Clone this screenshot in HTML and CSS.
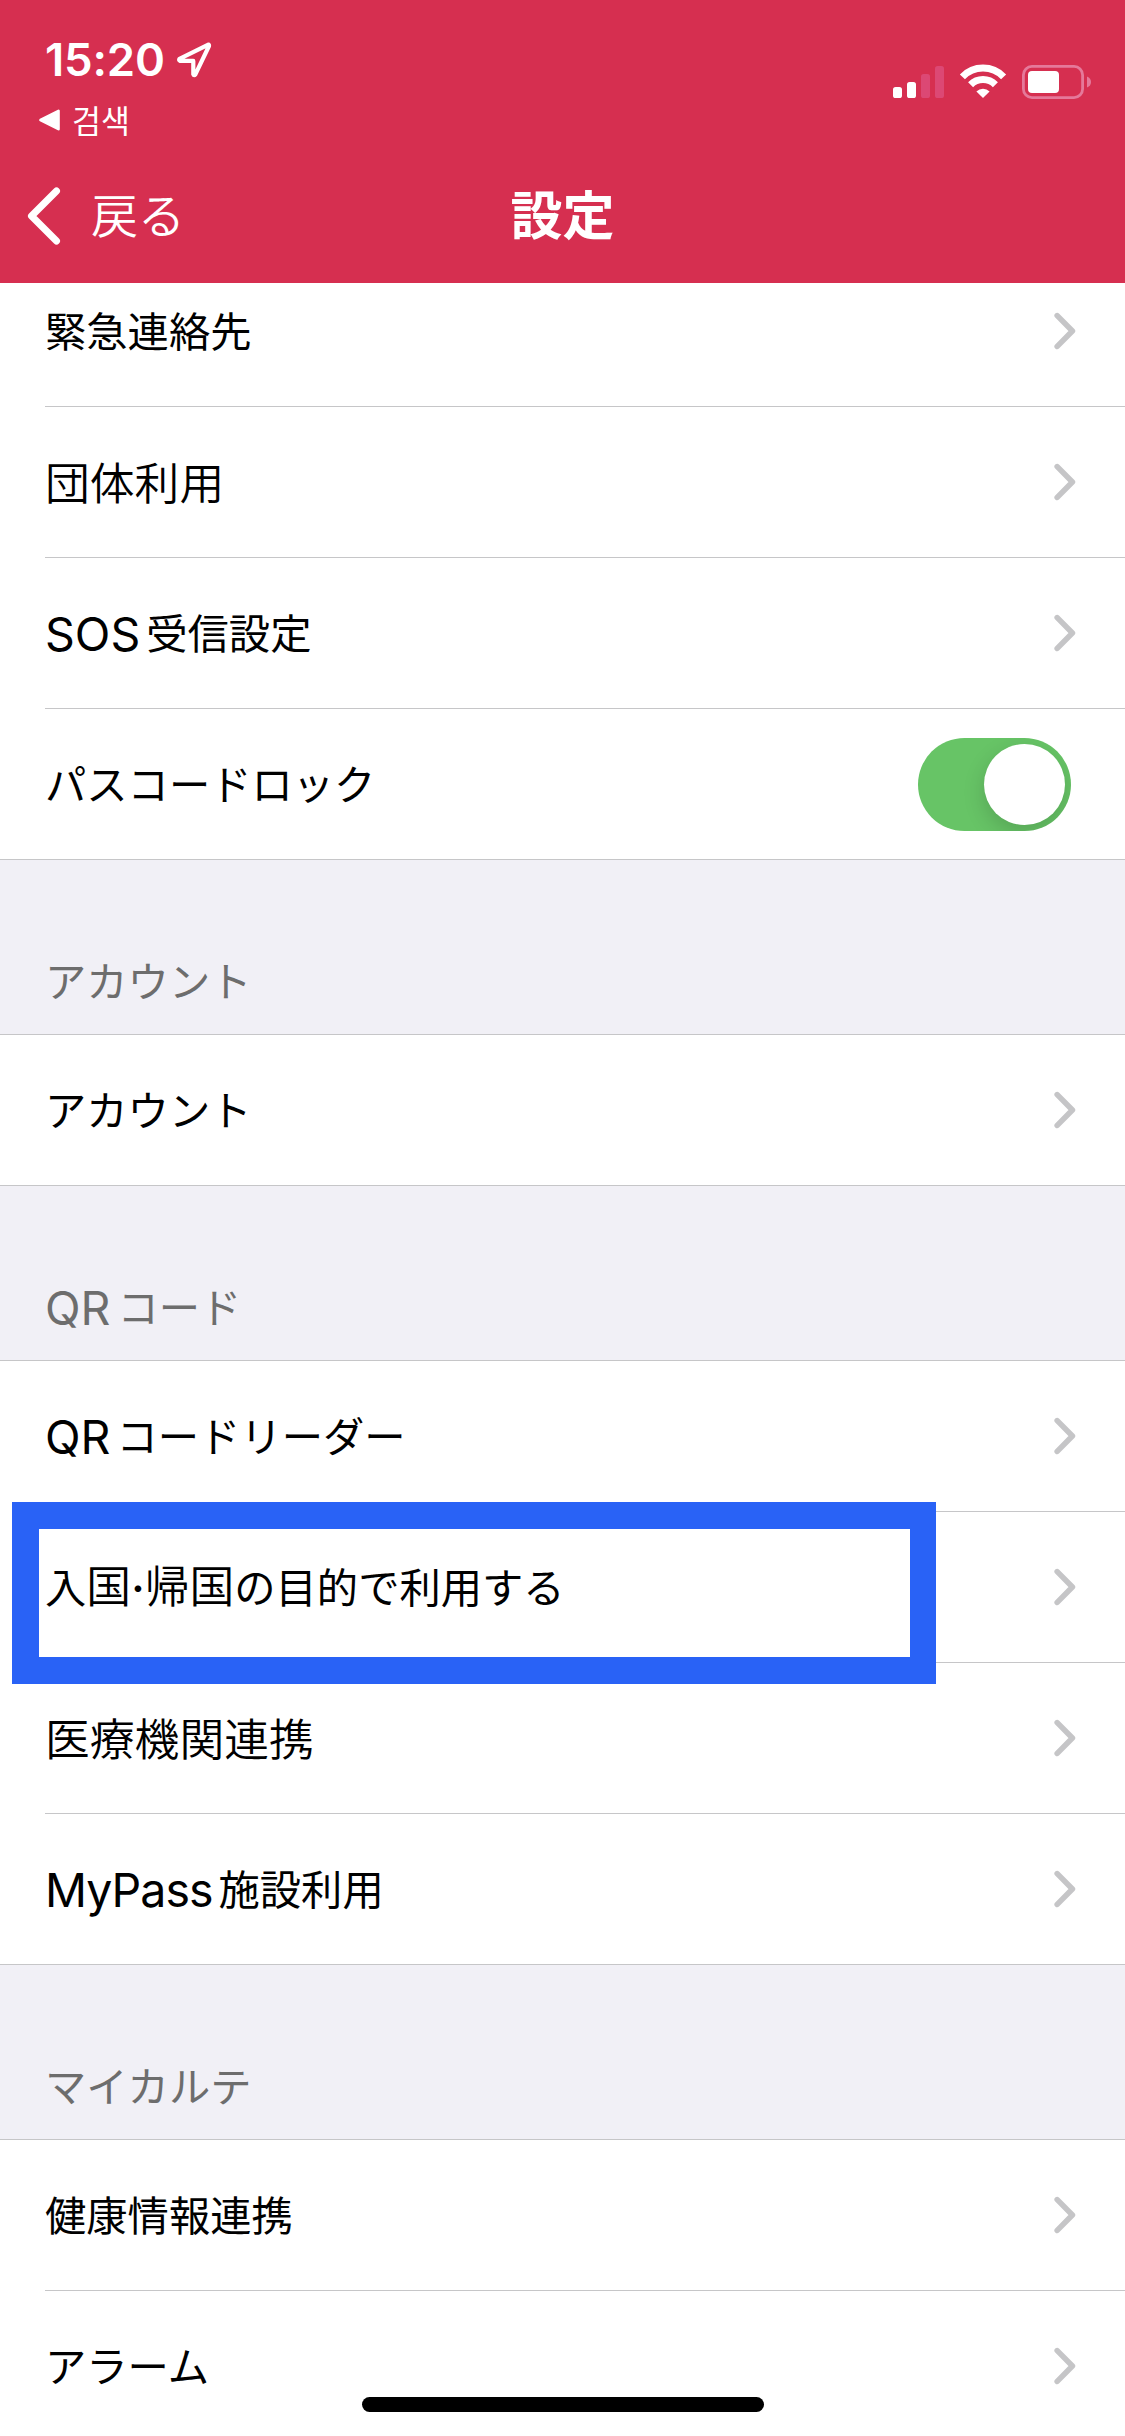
FILE: index.html
```html
<!DOCTYPE html>
<html lang="ja">
<head>
<meta charset="utf-8">
<title>設定</title>
<link rel="stylesheet" href="styles.css">
</head>
<body>
<svg class="defs" width="0" height="0" aria-hidden="true">
  <symbol id="chevron" viewBox="0 0 22 38"><path d="M3.2 3.6 18.4 19 3.2 34.4" fill="none" stroke="currentColor" stroke-width="5.6" stroke-linecap="round" stroke-linejoin="round"/></symbol>
</svg>
<div class="screen">
  <header class="top">
    <div class="status">
      <div class="status-left">
        <div class="clock">
          <span class="time">15:20</span>
          <svg class="location" viewBox="0 0 36 36"><path d="M32.3 2.7 3.5 16.9Q2.5 18.2 4 18.9H17.3V32.2Q18 34 19.4 32.3L33 4Q33.2 2.6 32.3 2.7Z" fill="none" stroke="#fff" stroke-width="4.2" stroke-linejoin="round"/></svg>
        </div>
        <div class="return">
          <svg class="return-arrow" viewBox="0 0 21 22"><path d="M19.5 1.8V20.2L1.5 11Z" fill="#fff" stroke="#fff" stroke-width="2.6" stroke-linejoin="round"/></svg>
          <span class="return-label" lang="ko">검색</span>
        </div>
      </div>
      <svg class="indicators" viewBox="0 0 200 36" fill="#fff">
        <rect x="1" y="23" width="9" height="11" rx="2.6"/>
        <rect x="15" y="18" width="9" height="16" rx="2.6"/>
        <rect x="29" y="10" width="9" height="24" rx="2.6" fill="#dc4874"/>
        <rect x="43" y="2" width="9" height="32" rx="2.6" fill="#dc4874"/>
        <g fill="none" stroke="#fff" stroke-width="7">
          <path d="M70.4 12.8A28.5 28.5 0 0 1 111.6 12.8"/>
          <path d="M78.6 20.7A17.3 17.3 0 0 1 103.4 20.7"/>
        </g>
        <path d="M84.4 27.4A9.8 9.8 0 0 1 97.6 27.4L91 34Z"/>
        <rect x="131.4" y="2.4" width="59.2" height="31.2" rx="8.5" fill="none" stroke="#e5799a" stroke-width="2.8"/>
        <rect x="136" y="7" width="31" height="22" rx="4"/>
        <path d="M195 12.5Q199 14 199 18T195 23.5Z" fill="#e5799a"/>
      </svg>
    </div>
    <nav class="nav">
      <a class="back"><svg class="back-icon" viewBox="0 0 34 58"><path d="M29.5 4 4.5 29 29.5 54" fill="none" stroke="#fff" stroke-width="7" stroke-linecap="round" stroke-linejoin="round"/></svg><span class="back-label">戻る</span></a>
      <h1 class="title">設定</h1>
    </nav>
  </header>

  <main class="list">
    <section class="group scrolled">
      <div class="row"><span class="label">緊急連絡先</span><svg class="chevron"><use href="#chevron"/></svg></div>
      <div class="row"><span class="label wide">団体利用</span><svg class="chevron"><use href="#chevron"/></svg></div>
      <div class="row"><span class="label"><span class="latin">SOS</span>受信設定</span><svg class="chevron"><use href="#chevron"/></svg></div>
      <div class="row"><span class="label">パスコードロック</span><span class="toggle"><span class="knob"></span></span></div>
    </section>
    <h2 class="heading">アカウント</h2>
    <section class="group">
      <div class="row"><span class="label">アカウント</span><svg class="chevron"><use href="#chevron"/></svg></div>
    </section>
    <h2 class="heading"><span class="latin">QR</span>コード</h2>
    <section class="group">
      <div class="row"><span class="label"><span class="latin">QR</span>コードリーダー</span><svg class="chevron"><use href="#chevron"/></svg></div>
      <div class="row marked"><span class="label">入<span class="wide">国<span class="dot">·</span>帰国</span>の目的で利用する</span><svg class="chevron"><use href="#chevron"/></svg></div>
      <div class="row"><span class="label wide">医療機関連携</span><svg class="chevron"><use href="#chevron"/></svg></div>
      <div class="row"><span class="label"><span class="latin tight">MyPass</span>施設利用</span><svg class="chevron"><use href="#chevron"/></svg></div>
    </section>
    <h2 class="heading">マイカルテ</h2>
    <section class="group">
      <div class="row"><span class="label">健康情報連携</span><svg class="chevron"><use href="#chevron"/></svg></div>
      <div class="row"><span class="label">アラーム</span><svg class="chevron"><use href="#chevron"/></svg></div>
    </section>
  </main>
  <div class="home-indicator"></div>
</div>
</body>
</html>
```
FILE: styles.css
```css
*, *::before { box-sizing: border-box; }
body { margin: 0; background: #fff; }
.defs { position: absolute; }
.screen {
  position: relative;
  display: flex;
  flex-direction: column;
  width: 1125px;
  height: 2436px;
  overflow: hidden;
  color: #000;
  font-family: "Noto Sans CJK JP", sans-serif;
}

/* Status bar and navigation */
.top { flex: none; height: 283px; background: #d62f50; color: #fff; }
.status { display: flex; justify-content: space-between; height: 150px; padding: 38px 33px 0 39px; }
.clock { display: flex; align-items: center; gap: 14px; height: 44px; padding-left: 6px; }
.time { width: 117px; font: 600 45.5px/44px Inter, sans-serif; letter-spacing: -0.2px; white-space: nowrap; }
.location { width: 36px; height: 36px; }
.return { display: flex; align-items: center; gap: 12px; height: 40px; margin-top: 18px; }
.return-arrow { width: 21px; height: 22px; }
.return-label { padding-bottom: 3px; font: 400 31.5px/40px "Noto Sans CJK KR", sans-serif; }
.indicators { width: 200px; height: 36px; margin-top: 26px; }
.nav { display: grid; grid-template-columns: 1fr auto 1fr; align-items: center; height: 131px; padding: 0 28px; }
.back { display: flex; align-items: center; gap: 30px; font-size: 47px; font-weight: 350; line-height: 60px; }
.back-icon { width: 34px; height: 58px; margin-left: -1px; }
.back-label { padding-bottom: 5px; }
.title { margin: 0; padding-bottom: 5px; font-size: 52px; font-weight: 700; line-height: 60px; }

/* Settings list */
.list { flex: 1; min-height: 0; overflow: hidden; }
.scrolled { margin-top: -27px; }
.row {
  position: relative;
  display: flex;
  align-items: center;
  justify-content: space-between;
  height: 151px;
  margin-left: 45px;
  padding-right: 49px;
  border-bottom: 1px solid #c6c6c8;
}
.row:last-child { margin-left: 0; padding-left: 45px; }
.label { padding-bottom: 5px; font-size: 41.3px; line-height: 60px; white-space: nowrap; }
.wide { font-size: 44.8px; font-weight: 350; line-height: 1; }
.label.wide { padding-bottom: 2px; }
.latin { margin-right: 6px; font-family: Inter, sans-serif; font-size: 46.5px; line-height: 1; vertical-align: -2px; }
.tight { letter-spacing: -1px; }
.dot { display: inline-block; width: 13.5px; font-family: Inter, sans-serif; font-size: 42px; font-weight: 600; line-height: 1; text-align: center; }
.heading {
  display: flex;
  align-items: baseline;
  height: 175px;
  margin: 0;
  padding: 89px 45px 0;
  border-bottom: 1px solid #c6c6c8;
  background: #f1f0f6;
  color: #6d6d6d;
  font-size: 41.3px;
  font-weight: 400;
  line-height: 60px;
}
.heading .latin { position: relative; top: 2px; margin-right: 7px; }
.chevron { width: 22px; height: 38px; color: #c5c5c7; }
.toggle { width: 153px; height: 93px; margin-right: 5px; padding: 6px; border-radius: 47px; background: #67c466; overflow: hidden; }
.knob { display: block; width: 81px; height: 81px; margin-left: auto; border-radius: 50%; background: #fff; box-shadow: 0 8px 22px rgba(0, 0, 0, .16); }

/* Highlight frame laid over the marked row */
.marked::before {
  content: "";
  position: absolute;
  z-index: 1;
  left: -33px;
  top: -10px;
  width: 924px;
  height: 182px;
  border: 27px solid #2962f6;
  border-right-width: 26px;
}
.home-indicator { position: absolute; left: 362px; top: 2397px; width: 402px; height: 15px; border-radius: 8px; background: #000; }
```
